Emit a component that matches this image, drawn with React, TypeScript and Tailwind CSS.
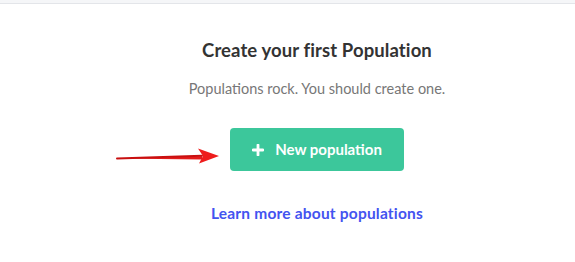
import React from 'react';

const App = () => {
  return (
    <div className="w-[575px] h-[262px] bg-white overflow-hidden relative" style={{ fontFamily: 'Lato, "Noto Sans", sans-serif' }}>
      <div className="h-[4px] bg-[#f5f6f8] border-b border-[#e3e5e9]" />
      <div className="flex flex-col items-center pl-[59px]">
        <h2 className="mt-[35px] text-[18.5px] leading-[22px] font-bold tracking-[0.1px] text-[#333333]">
          Create your first Population
        </h2>
        <p className="mt-[19px] text-[14.5px] leading-[18px] text-[#777777]">
          Populations rock. You should create one.
        </p>
        <div className="relative mt-[30px]">
          <button className="flex items-center justify-center w-[174px] h-[43px] rounded-[4px] bg-[#3cc79b] text-white text-[15px] font-bold">
            <svg width="12" height="12" viewBox="0 0 12 12" className="mr-[11px]">
              <path d="M6 1v10M1 6h10" stroke="white" strokeWidth="2.8" strokeLinecap="round" />
            </svg>
            New population
          </button>
          <svg width="108" height="18" viewBox="0 0 108 18" className="absolute left-[-114px] top-[19px]">
            <path d="M1 11.5 L86 9.2 L86 12.6 Z" fill="#e41b1b" />
            <path d="M1 11.5 L86 8.8" stroke="#c81010" strokeWidth="2" strokeLinecap="round" />
            <path d="M82 1.5 L103 9 L83 16.5 L87 9 Z" fill="#ee1c1c" />
          </svg>
        </div>
        <a href="#" className="mt-[33px] text-[15.5px] leading-[18px] font-bold tracking-[0.2px] text-[#4353f0]">
          Learn more about populations
        </a>
      </div>
    </div>
  );
};

export default App;
